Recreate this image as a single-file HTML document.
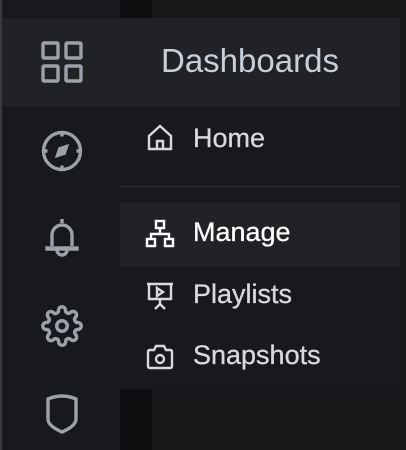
<!DOCTYPE html>
<html><head><style>
*{margin:0;padding:0;box-sizing:border-box}
body{width:406px;height:450px;background:#161719;position:relative;overflow:hidden;font-family:"Liberation Sans",sans-serif}
.sb{position:absolute;left:0;top:0;width:120px;height:450px;background:#18191c}
.sb .edge{position:absolute;left:0;top:0;width:2px;height:450px;background:#3a3b3e}
.dark{position:absolute;left:120px;top:0;width:32px;height:450px;background:#0e0f10}
.act{position:absolute;left:2px;top:18px;width:118px;height:88px;background:#202226}
.menu{position:absolute;left:120px;top:18px;width:280px;height:371px;background:#18191c}
.hd{position:absolute;left:0;top:0;width:280px;height:89px;background:#202226}
.t{position:absolute;color:#d8d9da;font-size:27px;white-space:nowrap;-webkit-text-stroke:0.3px currentColor}
svg{position:absolute}
</style></head><body>
<div class="sb"><div class="edge"></div></div>
<div class="dark"></div>
<div class="act"></div>
<svg style="left:41px;top:41px" width="42" height="42" viewBox="0 0 42 42" fill="none" stroke="#9ca1aa" stroke-width="3.4"><rect x="2" y="2" width="15" height="15" rx="1"/><rect x="25" y="2" width="15" height="15" rx="1"/><rect x="2" y="25" width="15" height="15" rx="1"/><rect x="25" y="25" width="15" height="15" rx="1"/></svg>
<svg style="left:41px;top:130px" width="42" height="42" viewBox="0 0 42 42" fill="none" stroke="#9ca1aa" stroke-width="3.4"><circle cx="21" cy="21" r="18.5"/><path d="M27 15 L24 24 L15 27 L18 18 Z" fill="#9ca1aa" stroke-width="1.5"/><path d="M21 2.5v4M21 35.5v4M2.5 21h4M35.5 21h4"/></svg>
<svg style="left:44px;top:216px" width="36" height="44" viewBox="0 0 36 44" fill="none" stroke="#9ca1aa" stroke-width="3.4"><path d="M18 3v4M8 30V19a10 10 0 0 1 20 0v11M3 32h30v1H3zM13 34a5 5 0 0 0 10 0"/></svg>
<svg style="left:41px;top:305px" width="42" height="42" viewBox="0 0 24 24" fill="none" stroke="#9ca1aa" stroke-width="2"><circle cx="12" cy="12" r="3"/><path d="M19.4 15a1.65 1.65 0 0 0 .33 1.82l.06.06a2 2 0 1 1-2.830 2.83l-.06-.06a1.65 1.65 0 0 0-1.82-.33 1.65 1.65 0 0 0-1 1.51V21a2 2 0 1 1-4 0v-.09A1.65 1.65 0 0 0 9 19.4a1.65 1.65 0 0 0-1.82.33l-.06.06a2 2 0 1 1-2.83-2.83l.06-.06A1.65 1.65 0 0 0 4.68 15a1.65 1.65 0 0 0-1.51-1H3a2 2 0 1 1 0-4h.09A1.65 1.65 0 0 0 4.6 9a1.65 1.65 0 0 0-.33-1.82l-.06-.06a2 2 0 1 1 2.83-2.83l.06.06A1.65 1.65 0 0 0 9 4.68 1.65 1.65 0 0 0 10 3.17V3a2 2 0 1 1 4 0v.09a1.65 1.65 0 0 0 1 1.51 1.65 1.65 0 0 0 1.82-.33l.06-.06a2 2 0 1 1 2.83 2.83l-.06.06A1.65 1.65 0 0 0 19.4 9a1.65 1.65 0 0 0 1.51 1H21a2 2 0 1 1 0 4h-.09a1.65 1.65 0 0 0-1.51 1z"/></svg>
<svg style="left:45px;top:393px" width="34" height="42" viewBox="0 0 34 42" fill="none" stroke="#9ca1aa" stroke-width="3.4"><path d="M3 6 Q17 0 31 6 V26 Q31 33 17 39 Q3 33 3 26 Z"/></svg>
<div class="menu">
<div class="hd"></div>
<div class="t" style="left:41px;top:24px;font-size:33px;color:#c7d0d9;-webkit-text-stroke:0">Dashboards</div>
<svg style="left:27px;top:106px" width="26" height="28" viewBox="0 0 26 28" fill="none" stroke="#d8d9da" stroke-width="2.4"><path d="M2 12 L13 2 L24 12 V25 H2 Z M10 25 V17 H16 V25"/></svg>
<div class="t" style="left:73px;top:105px">Home</div>
<div style="position:absolute;left:0;top:168px;width:280px;height:1px;background:#2c3235"></div>
<div style="position:absolute;left:0;top:185px;width:280px;height:63px;background:#202226"></div>
<svg style="left:25px;top:201px" width="30" height="30" viewBox="0 0 30 30" fill="none" stroke="#fff" stroke-width="2.4"><rect x="11" y="2" width="8" height="7"/><rect x="2" y="20" width="8" height="7"/><rect x="20" y="20" width="8" height="7"/><path d="M15 9v6M6 20v-5h18v5"/></svg>
<div class="t" style="left:73px;top:199px;color:#fff">Manage</div>
<svg style="left:26px;top:263px" width="28" height="30" viewBox="0 0 28 30" fill="none" stroke="#d8d9da" stroke-width="2.4"><path d="M1 3h26M3 3v15h22V3M14 18v5M14 23l-5 5M14 23l5 5M11 7v8l6-4z"/></svg>
<div class="t" style="left:73px;top:261px">Playlists</div>
<svg style="left:26px;top:326px" width="28" height="26" viewBox="0 0 28 26" fill="none" stroke="#d8d9da" stroke-width="2.4"><path d="M2 8 Q2 6 4 6 H8 L10 2 H18 L20 6 H24 Q26 6 26 8 V22 Q26 24 24 24 H4 Q2 24 2 22 Z"/><circle cx="14" cy="15" r="4"/></svg>
<div class="t" style="left:73px;top:322px">Snapshots</div>
</div>
</body></html>
